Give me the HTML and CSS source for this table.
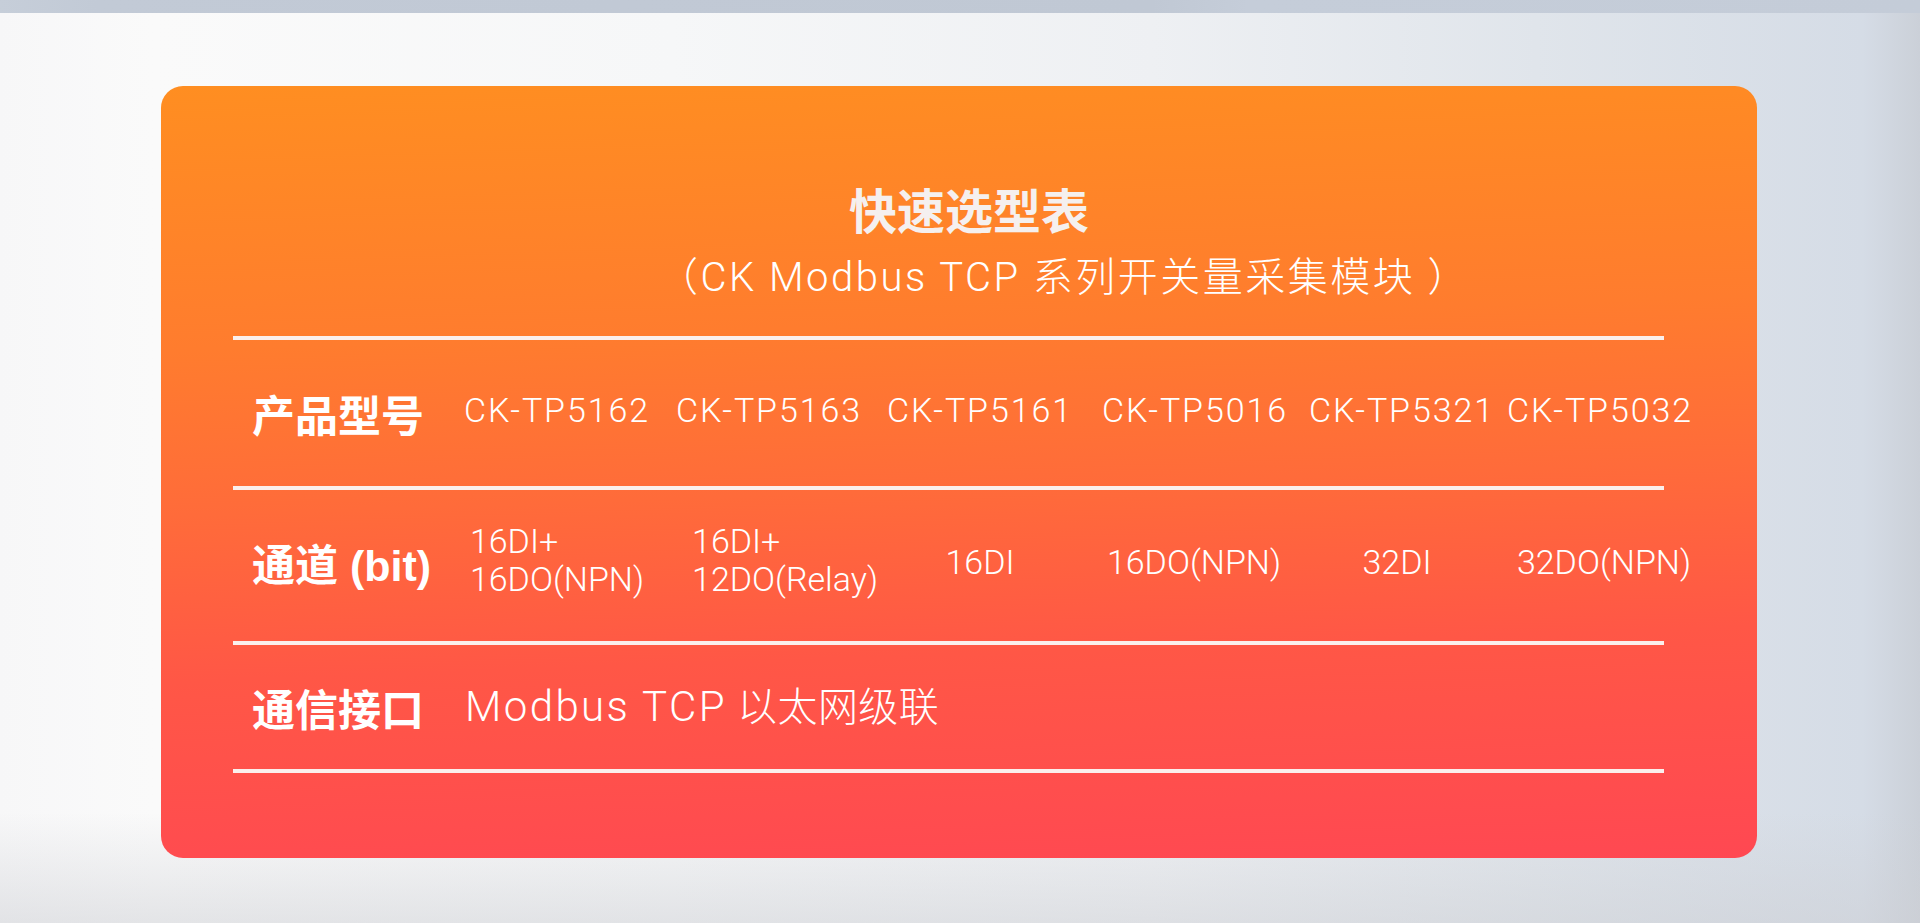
FILE: index.html
```html
<!DOCTYPE html>
<html lang="zh-CN">
<head>
<meta charset="utf-8">
<title>快速选型表</title>
<link rel="stylesheet" href="styles.css">
</head>
<body>
<div class="topbar"></div>
<main class="page">
  <section class="card">
    <h1 class="title">快速选型表</h1>
    <p class="subtitle">（CK Modbus TCP 系列开关量采集模块 ）</p>
    <div class="table">
      <div class="rule"></div>
      <div class="row row-model">
        <div class="label">产品型号</div>
        <div class="cell">CK-TP5162</div>
        <div class="cell">CK-TP5163</div>
        <div class="cell">CK-TP5161</div>
        <div class="cell">CK-TP5016</div>
        <div class="cell">CK-TP5321</div>
        <div class="cell">CK-TP5032</div>
      </div>
      <div class="rule"></div>
      <div class="row row-channel">
        <div class="label">通道 (bit)</div>
        <div class="cell"><span class="stack">16DI+<br>16DO(NPN)</span></div>
        <div class="cell"><span class="stack">16DI+<br>12DO(Relay)</span></div>
        <div class="cell">16DI</div>
        <div class="cell">16DO(NPN)</div>
        <div class="cell">32DI</div>
        <div class="cell">32DO(NPN)</div>
      </div>
      <div class="rule"></div>
      <div class="row row-comm">
        <div class="label">通信接口</div>
        <div class="wide"><span class="latin">Modbus TCP</span> 以太网级联</div>
      </div>
      <div class="rule"></div>
    </div>
  </section>
</main>
</body>
</html>
```
FILE: styles.css
```css
html, body {
  margin: 0;
  padding: 0;
}
body {
  width: 1920px;
  height: 923px;
  overflow: hidden;
  background:
    linear-gradient(180deg, rgba(255,255,255,0) 0%, rgba(255,255,255,0) 88%, rgba(205,207,212,0.5) 100%),
    linear-gradient(90deg, #f7f7f8 0%, #fafafa 8%, #f6f7f8 35%, #eef0f3 60%, #e0e5eb 80%, #d5dce6 97%, #cbd0d8 100%);
  font-family: Roboto, "Noto Sans CJK SC", sans-serif;
}
.topbar {
  height: 13px;
  background: linear-gradient(90deg, #c6ced9 0%, #c2cad6 5%, #c0c8d4 60%, #c5cdd9 65%, #c4ccd8 100%);
}
.page {
  padding-top: 73px;
  padding-left: 161px;
}
.card {
  box-sizing: border-box;
  width: 1596px;
  height: 772px;
  border-radius: 22px;
  background: linear-gradient(178deg, #ff8e21 0%, #ff7c2e 32%, #ff6b3a 52%, #ff5746 72%, #ff4852 100%);
  padding-top: 94px;
  color: #fff;
}
.title {
  margin: 0;
  padding-left: 688px;
  font-family: "Noto Sans CJK SC", sans-serif;
  font-weight: 700;
  font-size: 48px;
  line-height: 56px;
  color: #f5f0ef;
}
.subtitle {
  margin: 17px 0 0;
  padding-left: 497px;
  font-family: Roboto, "Noto Sans CJK SC", sans-serif;
  font-weight: 300;
  font-size: 40px;
  line-height: 50px;
  letter-spacing: 2.5px;
  white-space: nowrap;
}
.table {
  margin-top: 33px;
  margin-left: 72px;
  width: 1431px;
}
.rule {
  height: 4px;
  background: #fbefec;
}
.row {
  display: grid;
  align-items: center;
  padding-left: 19px;
}
.row-model {
  height: 146px;
  grid-template-columns: 200px 210px 214px 208px 222px 192px 204px;
}
.row-channel {
  height: 151px;
  grid-template-columns: 200px 210px 246px 144px 284px 122px 292px;
}
.row-comm {
  height: 124px;
  grid-template-columns: 200px 1fr;
}
.label {
  font-family: "Noto Sans CJK SC", sans-serif;
  font-weight: 700;
  font-size: 43px;
  line-height: 50px;
  white-space: nowrap;
}
.row-channel .label {
  font-family: "Liberation Sans", "Noto Sans CJK SC", sans-serif;
}
.cell {
  display: flex;
  justify-content: center;
  font-weight: 300;
  font-size: 34px;
  line-height: 40px;
  white-space: nowrap;
}
.row-model .cell {
  letter-spacing: 1.9px;
  margin-bottom: 6px;
}
.row-channel .cell {
  margin-bottom: 8px;
}
.stack {
  display: block;
  text-align: left;
  line-height: 38px;
  margin-bottom: 4px;
}
.wide {
  padding-left: 13px;
  font-weight: 300;
  font-size: 40px;
  line-height: 48px;
  letter-spacing: 0.4px;
  white-space: nowrap;
}
.latin {
  font-size: 42px;
  letter-spacing: 2.4px;
}
```
